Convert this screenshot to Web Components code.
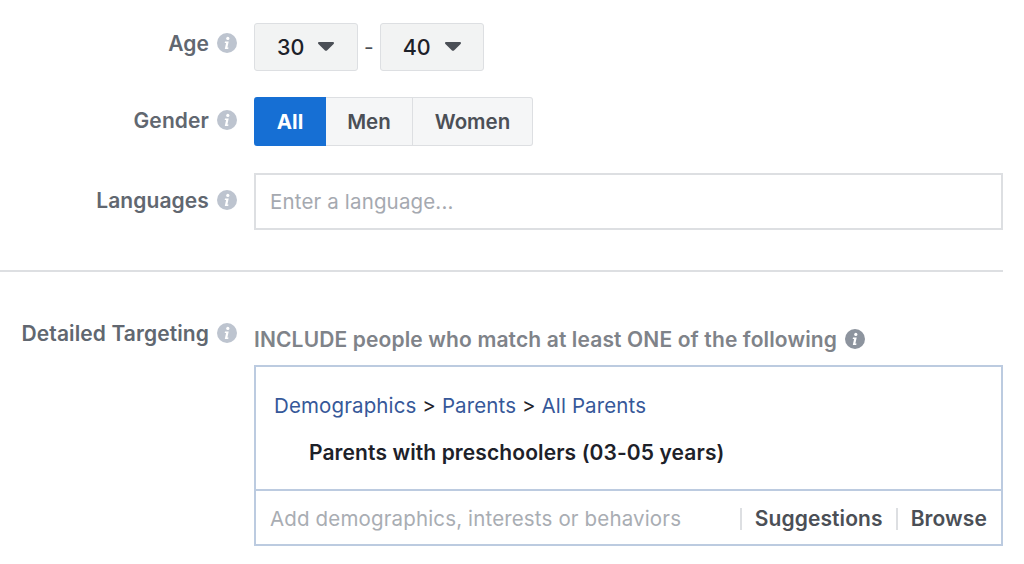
<!DOCTYPE html>
<html>
<head>
<meta charset="utf-8">
<style>
  html, body { margin: 0; padding: 0; background: #fff; }
  body { width: 1024px; height: 564px; overflow: hidden; font-family: Inter, "Liberation Sans", sans-serif; }
</style>
</head>
<body>
<targeting-form></targeting-form>
<script>
class InfoIcon extends HTMLElement {
  constructor() {
    super();
    this.attachShadow({ mode: 'open' });
    this.shadowRoot.innerHTML = `
      <style>
        :host { display: inline-block; width: 20px; height: 20px; color: #bdc4cf; flex: none; }
        svg { display: block; }
      </style>
      <svg width="20" height="20" viewBox="0 0 20 20">
        <circle cx="10" cy="10" r="10" fill="currentColor"/>
        <circle cx="10.8" cy="5.4" r="1.6" fill="#fff"/>
        <path d="M8 8.6h3.7l-1.3 6h1.1l-.3 1.3H7.8l1.3-6H7.7z" fill="#fff"/>
      </svg>`;
  }
}
customElements.define('info-icon', InfoIcon);

class FormRow extends HTMLElement {
  constructor() {
    super();
    this.attachShadow({ mode: 'open' });
    this.shadowRoot.innerHTML = `
      <style>
        :host { display: grid; grid-template-columns: 237px 1fr; column-gap: 17px; width: 1003px; }
        .label {
          display: flex; justify-content: flex-end; align-items: center; gap: 8px;
          height: 20px; margin-top: var(--label-top, 10px);
          font-size: 21px; font-weight: 600; color: #616770; white-space: nowrap; letter-spacing: .1px;
        }
      </style>
      <div class="label"><span><slot name="label"></slot></span><info-icon></info-icon></div>
      <div><slot></slot></div>`;
  }
}
customElements.define('form-row', FormRow);

class AgeSelect extends HTMLElement {
  constructor() {
    super();
    this.attachShadow({ mode: 'open' });
    this.shadowRoot.innerHTML = `
      <style>
        :host {
          display: inline-flex; align-items: center; box-sizing: border-box;
          width: 104px; height: 48px; padding-left: 22px; gap: 14px;
          background: #f2f3f3; border: 1px solid #dddfe2; border-radius: 3px;
          font-size: 21.5px; font-weight: 500; color: #1d2129;
        }
        svg { display: block; margin-top: -1px; }
      </style>
      <span><slot></slot></span>
      <svg width="16" height="9" viewBox="0 0 16 10" preserveAspectRatio="none"><path d="M0 1.2C0 .5.5 0 1.2 0h13.6c.7 0 1.2.5 1.2 1.2 0 .3-.1.6-.4.9L9 9.400c-.6.6-1.400.6-2 0L.4 2.100C.1 1.800 0 1.500 0 1.200z" fill="#4b4f56"/></svg>`;
  }
}
customElements.define('age-select', AgeSelect);

class GenderToggle extends HTMLElement {
  constructor() {
    super();
    this.attachShadow({ mode: 'open' });
    this.shadowRoot.innerHTML = `
      <style>
        :host { display: inline-flex; height: 49px; font-size: 20.5px; font-weight: 600; color: #4b4f56; }
        div {
          display: flex; align-items: center; justify-content: center; box-sizing: border-box;
          background: #f5f6f7; border: 1px solid #dddfe2; border-left: 0;
        }
        .all { width: 72px; background: #166fd4; border: 0; color: #fff; border-radius: 3px 0 0 3px; font-weight: 700; }
        .men { width: 87px; }
        .women { width: 120px; border-radius: 0 3px 3px 0; }
      </style>
      <div class="all">All</div><div class="men">Men</div><div class="women">Women</div>`;
  }
}
customElements.define('gender-toggle', GenderToggle);

class LanguageInput extends HTMLElement {
  constructor() {
    super();
    this.attachShadow({ mode: 'open' });
    this.shadowRoot.innerHTML = `
      <style>
        :host {
          display: flex; align-items: center; box-sizing: border-box;
          height: 57px; padding: 0 14px; border: 2px solid #dddfe2;
          font-size: 20.5px; color: #a5a9b0; letter-spacing: .15px;
        }
      </style>
      <slot></slot>`;
  }
}
customElements.define('language-input', LanguageInput);

class TargetingBox extends HTMLElement {
  constructor() {
    super();
    this.attachShadow({ mode: 'open' });
    this.shadowRoot.innerHTML = `
      <style>
        :host { display: block; box-sizing: border-box; height: 181px; border: 2px solid #bccbe0; font-size: 20.5px; }
        .top { box-sizing: border-box; height: 122px; padding: 25px 18px 0; }
        .path { height: 27px; line-height: 27px; color: #1d2129; letter-spacing: .12px; }
        .path a { color: #365899; text-decoration: none; }
        .item { margin: 20px 0 0 35px; height: 27px; line-height: 27px; font-size: 21px; font-weight: 600; color: #1d2129; letter-spacing: .1px; }
        .bottom {
          display: flex; align-items: center; box-sizing: border-box; height: 55px;
          border-top: 2px solid #bccbe0; padding: 2px 14px 0;
        }
        .hint { flex: 1; color: #a9adb3; letter-spacing: .15px; }
        .act { font-size: 21px; font-weight: 600; color: #4b4f56; padding-left: 13px; margin-left: 13px; border-left: 2px solid #dddfe2; line-height: 22px; letter-spacing: .1px; }
      </style>
      <div class="top">
        <div class="path"><a href="#">Demographics</a> &gt; <a href="#">Parents</a> &gt; <a href="#">All Parents</a></div>
        <div class="item">Parents with preschoolers (03-05 years)</div>
      </div>
      <div class="bottom">
        <span class="hint">Add demographics, interests or behaviors</span>
        <span class="act">Suggestions</span><span class="act">Browse</span>
      </div>`;
  }
}
customElements.define('targeting-box', TargetingBox);

class TargetingForm extends HTMLElement {
  constructor() {
    super();
    this.attachShadow({ mode: 'open' });
    this.shadowRoot.innerHTML = `
      <style>
        :host { display: block; padding-top: 23px; }
        .age { display: flex; align-items: center; gap: 6px; font-size: 21px; color: #4b4f56; }
        .gender { margin-top: 26px; }
        .lang { margin-top: 27px; }
        hr { width: 1003px; margin: 40px 0 0; border: 0; border-top: 2px solid #dddfe2; }
        .detail { margin-top: 51px; }
        .head {
          display: flex; align-items: center; gap: 8px; height: 26px; margin: 3px 0 13px;
          font-size: 21px; font-weight: 600; color: #7f8389; white-space: nowrap; letter-spacing: .13px;
        }
        .head info-icon { color: #8d949e; }
      </style>
      <form-row style="--label-top:10px">
        <span slot="label">Age</span>
        <div class="age"><age-select>30</age-select><span>-</span><age-select>40</age-select></div>
      </form-row>
      <form-row class="gender" style="--label-top:13px">
        <span slot="label">Gender</span>
        <gender-toggle></gender-toggle>
      </form-row>
      <form-row class="lang" style="--label-top:17px">
        <span slot="label">Languages</span>
        <language-input>Enter a language...</language-input>
      </form-row>
      <hr>
      <form-row class="detail" style="--label-top:0px">
        <span slot="label">Detailed Targeting</span>
        <div>
          <div class="head"><span>INCLUDE people who match at least ONE of the following</span><info-icon></info-icon></div>
          <targeting-box></targeting-box>
        </div>
      </form-row>`;
  }
}
customElements.define('targeting-form', TargetingForm);
</script>
</body>
</html>
